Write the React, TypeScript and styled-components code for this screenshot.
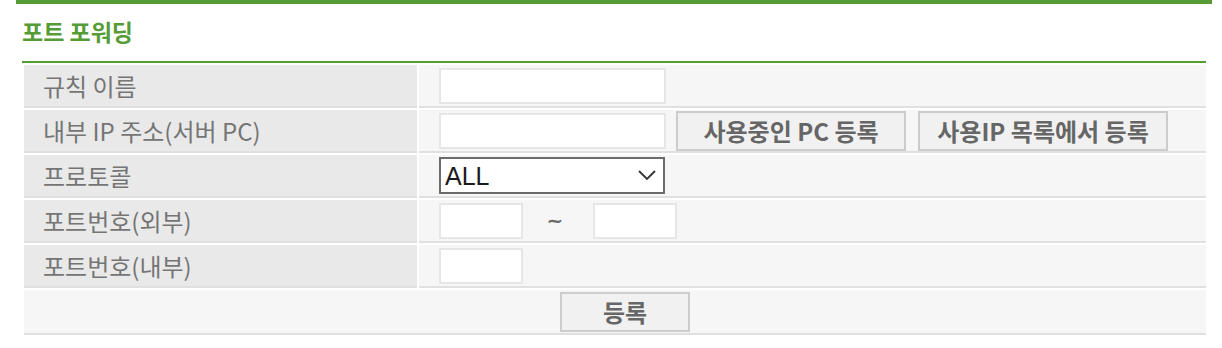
import React from "react";
import styled, { createGlobalStyle } from "styled-components";

const GREEN = "#559c37";

const Global = createGlobalStyle`
  html, body { margin: 0; padding: 0; background: #fff; }
  body { font-family: "Noto Sans CJK KR", "Noto Sans", sans-serif; }
  * { box-sizing: border-box; }
`;

const Page = styled.div`
  margin: 0 10px 0 16px;
  border-top: 4px solid ${GREEN};
  padding: 0 6px;
`;

const Title = styled.h2`
  margin: 0;
  height: 57px;
  display: flex;
  align-items: center;
  padding-bottom: 2px;
  font-size: 23px;
  font-weight: 700;
  color: ${GREEN};
  line-height: 1;
`;

const Table = styled.div`
  border-top: 2px solid ${GREEN};
  padding: 2px 0 0 2px;
  display: grid;
  grid-template-columns: 393px 1fr;
  column-gap: 2px;
  row-gap: 2px;
`;

const Cell = styled.div<{ $label?: boolean; $span?: boolean; $h?: number }>`
  height: ${(p) => p.$h ?? 43}px;
  display: flex;
  align-items: center;
  border-bottom: 2px solid #e0e0e0;
  background: ${(p) => (p.$label ? "#e9e9e9" : "#f6f6f6")};
  padding-left: ${(p) => (p.$label ? 19 : 20)}px;
  grid-column: ${(p) => (p.$span ? "1 / -1" : "auto")};
  justify-content: ${(p) => (p.$span ? "center" : "flex-start")};
  color: #757575;
  font-size: 24px;
  line-height: 1;
  white-space: nowrap;
`;

const TextInput = styled.input<{ $w: number }>`
  width: ${(p) => p.$w}px;
  height: 36px;
  border: 2px solid #e6e6e6;
  background: #fff;
  outline: none;
  padding: 0 6px;
  font: inherit;
`;

const Button = styled.button<{ $w: number; $ml?: number }>`
  width: ${(p) => p.$w}px;
  height: 40px;
  margin-left: ${(p) => p.$ml ?? 0}px;
  border: 2px solid #cccccc;
  background: #f1f1f1;
  color: #666;
  font-family: "Noto Sans CJK KR", "Noto Sans", sans-serif;
  font-weight: 700;
  font-size: 24px;
  line-height: 1;
  padding: 0;
  display: flex;
  align-items: center;
  justify-content: center;
  white-space: nowrap;
`;

const SelectWrap = styled.div`
  position: relative;
  width: 226px;
  height: 37px;
`;

const Select = styled.select`
  appearance: none;
  -webkit-appearance: none;
  width: 100%;
  height: 100%;
  border: 2px solid #6b6b6b;
  border-radius: 0;
  background: #fff;
  color: #1a1a1a;
  font-family: "Liberation Sans", Arial, sans-serif;
  font-size: 25px;
  padding: 0 0 0 4px;
  outline: none;
`;

const Chevron = styled.svg`
  position: absolute;
  right: 9px;
  top: 13px;
  pointer-events: none;
`;

const Tilde = styled.span`
  width: 70px;
  text-align: center;
  color: #6a6a6a;
  font-family: "DejaVu Sans", sans-serif;
  font-size: 20px;
  font-weight: 700;
  padding-right: 6px;
  padding-bottom: 2px;
`;

export default function App() {
  return (
    <>
      <Global />
      <Page>
        <Title>포트 포워딩</Title>
        <Table>
          <Cell $label>규칙 이름</Cell>
          <Cell>
            <TextInput $w={227} />
          </Cell>

          <Cell $label>내부 IP 주소(서버 PC)</Cell>
          <Cell>
            <TextInput $w={227} />
            <Button $w={230} $ml={10}>사용중인 PC 등록</Button>
            <Button $w={250} $ml={12}>사용IP 목록에서 등록</Button>
          </Cell>

          <Cell $label>프로토콜</Cell>
          <Cell>
            <SelectWrap>
              <Select defaultValue="ALL">
                <option value="ALL">ALL</option>
                <option value="TCP">TCP</option>
                <option value="UDP">UDP</option>
              </Select>
              <Chevron width="18" height="10" viewBox="0 0 18 10">
                <path d="M1 1 L9 9 L17 1" fill="none" stroke="#333" strokeWidth="1.8" />
              </Chevron>
            </SelectWrap>
          </Cell>

          <Cell $label>포트번호(외부)</Cell>
          <Cell>
            <TextInput $w={84} />
            <Tilde>~</Tilde>
            <TextInput $w={84} />
          </Cell>

          <Cell $label>포트번호(내부)</Cell>
          <Cell>
            <TextInput $w={84} />
          </Cell>

          <Cell $span $h={45}>
            <Button $w={130}>등록</Button>
          </Cell>
        </Table>
      </Page>
    </>
  );
}
